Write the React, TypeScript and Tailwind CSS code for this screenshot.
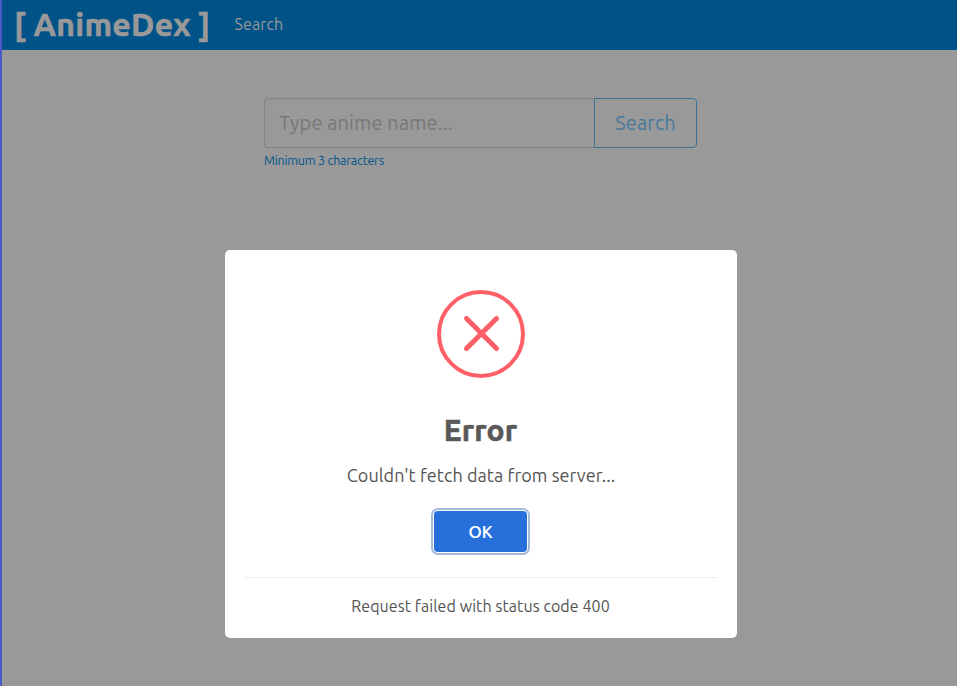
export default function App() {
  return (
    <div className="relative h-[686px] w-full overflow-hidden border-l-2 border-[#4a59c8] bg-[#999] font-['Ubuntu','Noto_Sans',sans-serif]">
      <nav className="flex h-[50px] items-center bg-linear-to-b from-[#005286] to-[#005389] text-[#999]">
        <a className="ml-3 -mt-0.5 w-[197px] whitespace-nowrap text-[32px] font-bold leading-none tracking-[0.27px] [-webkit-text-stroke:0.6px_#999]">[ AnimeDex ]</a>
        <a className="-mt-[3px] ml-[23.500px] text-[16px] leading-none tracking-[0.1px]">Search</a>
      </nav>

      <main className="ml-[262px] mt-12 w-[433px]">
        <div className="flex h-[50px]">
          <div className="flex w-[330px] items-center rounded-l-[4px] border border-r-0 border-[#828383] pl-[14px] text-[20px] tracking-[0.1px] text-[#777] shadow-[inset_0_1px_1px_rgba(0,0,0,0.05)]">
            <span className="whitespace-nowrap">Type anime name...</span>
          </div>
          <button className="flex w-[103px] items-center justify-center rounded-r-[4px] border border-[#3c7194] text-[20px] tracking-[0.1px] text-[#46789b]">
            Search
          </button>
        </div>
        <p className="mt-1 whitespace-nowrap text-[12.5px] leading-4 tracking-[-0.2px] text-[#00558c]">Minimum 3 characters</p>
      </main>

      <div role="dialog" className="absolute left-[223px] top-[250px] flex h-[388px] w-[512px] flex-col items-center rounded-[5px] bg-white px-5 pt-10 text-[#545454]">
        <svg className="h-[88px] w-[88px] shrink-0" viewBox="0 0 88 88" fill="none" stroke="#ff5f67">
          <circle cx="44" cy="44" r="42" strokeWidth="4" />
          <path d="M29.500 28.500 L59.500 58.500 M59.500 28.500 L29.500 58.500" strokeWidth="5" strokeLinecap="round" />
        </svg>
        <h2 className="mr-px mt-[31px] h-[42px] text-[30px] font-bold leading-[42px] tracking-[0.2px] text-[#595959] [-webkit-text-stroke:0.6px_#595959]">Error</h2>
        <p className="mt-[11px] whitespace-nowrap text-[18px] leading-[26px] tracking-[0.07px]">Couldn't fetch data from server...</p>
        <button className="mr-px mt-[23px] h-[41px] w-[93px] rounded-[4px] bg-[#2770db] text-[17px] font-medium text-white shadow-[0_0_0_1px_#fff,0_0_0_3px_#a6bbdb] [-webkit-text-stroke:0.2px_#fff]">OK</button>
        <div className="mt-[25px] w-full border-t border-[#eee] pr-px pt-4 text-center text-[16px] leading-6 tracking-[0.08px]">Request failed with status code 400</div>
      </div>
    </div>
  );
}
